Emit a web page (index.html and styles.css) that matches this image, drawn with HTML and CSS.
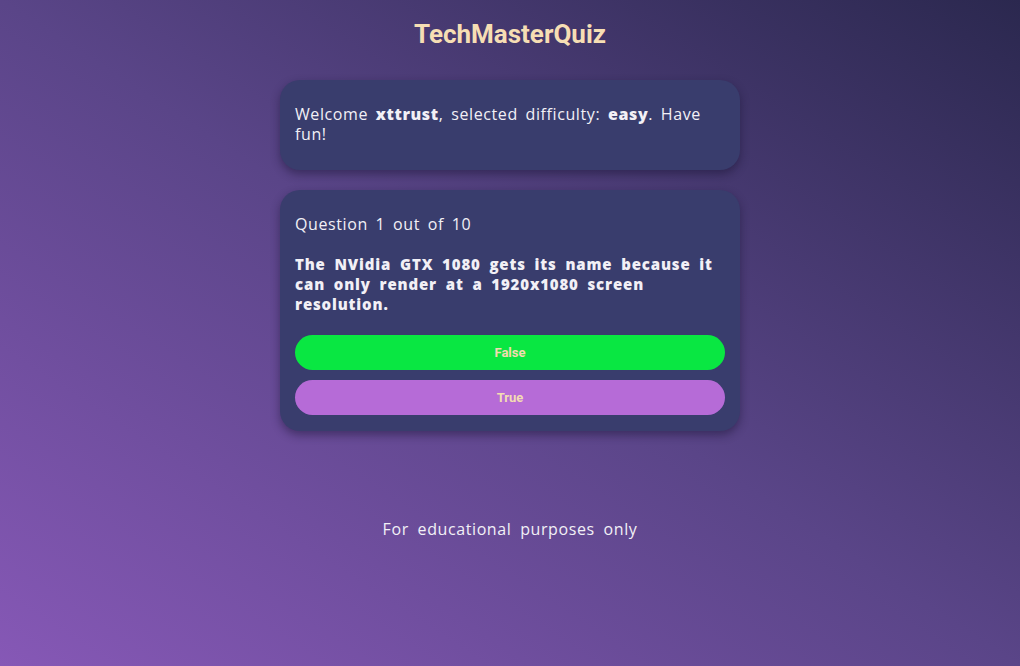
FILE: index.html
```html
<!DOCTYPE html>
<html>
<head>
<meta charset="utf-8">
<link rel="stylesheet" href="styles.css">
</head>
<body>
<div class="page">
  <h1 class="title">TechMasterQuiz</h1>
  <div class="card welcome">
    <p>Welcome <b>xttrust</b>, selected difficulty: <b>easy</b>. Have fun!</p>
  </div>
  <div class="card quiz">
    <p class="counter">Question 1 out of 10</p>
    <p class="question">The NVidia GTX 1080 gets its name because it can only render at a 1920x1080 screen resolution.</p>
    <div class="answers">
      <button class="btn btn-false">False</button>
      <button class="btn btn-true">True</button>
    </div>
  </div>
  <p class="footer">For educational purposes only</p>
</div>
</body>
</html>
```
FILE: styles.css
```css
html, body {
  margin: 0;
  height: 100%;
}
body {
  background: linear-gradient(to top right, #8658b6 0%, #5a4588 50%, #2b284f 100%);
  font-family: "Open Sans", "DejaVu Sans", sans-serif;
  color: #f2f0f6;
  letter-spacing: 0.6px;
}
.page {
  width: 460px;
  margin: 0 auto;
  padding-top: 19px;
  display: flex;
  flex-direction: column;
}
.title {
  margin: 0;
  text-align: center;
  font-family: Roboto, sans-serif;
  font-weight: 700;
  font-size: 26px;
  line-height: 30px;
  color: #f6deb4;
  letter-spacing: 0;
}
.card {
  background: #393d6d;
  border-radius: 20px;
  box-shadow: 0 4px 10px rgba(20, 15, 45, 0.45);
  padding: 16px 15px;
}
.card p {
  margin: 0;
}
.welcome {
  margin-top: 31px;
  padding-top: 24px;
  padding-bottom: 26px;
  font-size: 16px;
  line-height: 20px;
  word-spacing: 3px;
}
.welcome b {
  font-weight: 800;
}
.quiz {
  margin-top: 20px;
  padding-top: 24px;
  padding-bottom: 16px;
}
.counter {
  font-size: 16px;
  line-height: 20px;
  word-spacing: 3px;
}
.question {
  margin-top: 20px !important;
  font-size: 15px;
  line-height: 20px;
  font-weight: 800;
  letter-spacing: 0.85px;
  word-spacing: 4px;
}
.answers {
  margin-top: 21px;
  display: flex;
  flex-direction: column;
  gap: 10px;
}
.btn {
  height: 35px;
  border: none;
  border-radius: 18px;
  font-family: Roboto, sans-serif;
  font-weight: 700;
  font-size: 13px;
  letter-spacing: 0;
  color: #f3dcb2;
  cursor: pointer;
}
.btn-false { background: #09e742; }
.btn-true { background: #b66bd7; }
.footer {
  margin: 88px 0 0;
  text-align: center;
  font-size: 16px;
  line-height: 20px;
  word-spacing: 4px;
}
```
